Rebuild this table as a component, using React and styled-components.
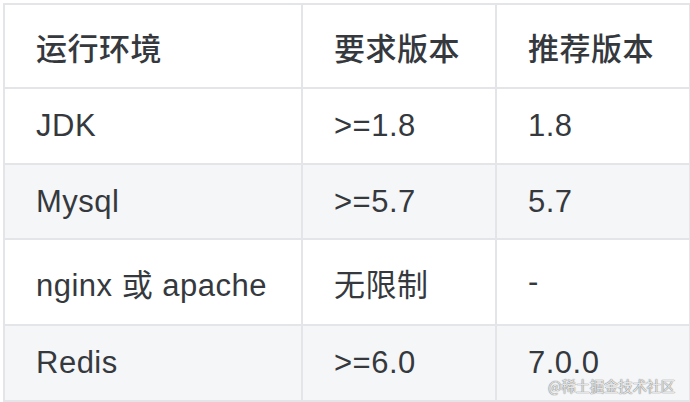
import React from "react";
import styled, { createGlobalStyle } from "styled-components";

const Global = createGlobalStyle`
  html, body { margin: 0; padding: 0; background: #ffffff; }
  body { font-family: "Liberation Sans", "Noto Sans CJK SC", sans-serif; }
`;

const Page = styled.div`
  position: relative;
  padding: 3px 0 0 3px;
  width: 690px;
  height: 402px;
  box-sizing: border-box;
`;

const Table = styled.table`
  border-collapse: collapse;
  width: 686px;
  table-layout: fixed;
  color: #35393e;
  font-size: 31px;
  letter-spacing: 0.5px;
  font-family: "Liberation Sans", "Noto Sans CJK SC", sans-serif;
`;

const Col = styled.col`
  width: ${(p) => p.$w}px;
`;

const Row = styled.tr`
  background: ${(p) => (p.$striped ? "#f5f6f8" : "#ffffff")};
  height: ${(p) => p.$h}px;
`;

const Cell = styled.td`
  border: 2px solid #e3e5e8;
  padding: 0 0 0 31px;
  vertical-align: middle;
  white-space: nowrap;
  font-weight: ${(p) => (p.$head ? 500 : 400)};
`;

const Watermark = styled.div`
  position: absolute;
  left: 548px;
  top: 375px;
  font-size: 14.5px;
  color: rgba(255, 255, 255, 0.85);
  text-shadow: 0 0 1px rgba(0, 0, 0, 0.55), 0 0 1px rgba(0, 0, 0, 0.4);
  font-family: "Noto Sans CJK SC", sans-serif;
  letter-spacing: -0.3px;
`;

const rows = [
  { h: 84, cells: ["运行环境", "要求版本", "推荐版本"], head: true },
  { h: 76, cells: ["JDK", ">=1.8", "1.8"] },
  { h: 75, cells: ["Mysql", ">=5.7", "5.7"], striped: true },
  { h: 86, cells: ["nginx 或 apache", "无限制", "-"] },
  { h: 76, cells: ["Redis", ">=6.0", "7.0.0"], striped: true },
];

export default function App() {
  return (
    <Page>
      <Global />
      <Table>
        <colgroup>
          <Col $w={298} />
          <Col $w={194} />
          <Col $w={194} />
        </colgroup>
        <tbody>
          {rows.map((r, i) => (
            <Row key={i} $h={r.h} $striped={r.striped}>
              {r.cells.map((c, j) => (
                <Cell key={j} $head={r.head}>
                  {c}
                </Cell>
              ))}
            </Row>
          ))}
        </tbody>
      </Table>
      <Watermark>@稀土掘金技术社区</Watermark>
    </Page>
  );
}
